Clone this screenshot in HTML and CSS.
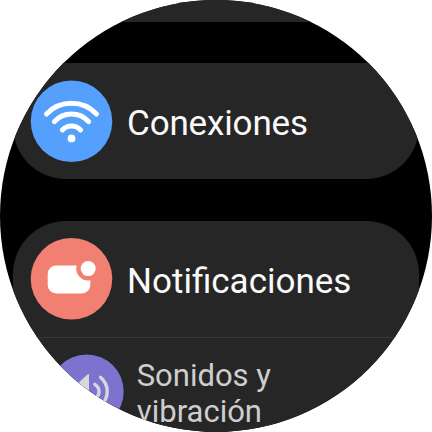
FILE: index.html
```
<!DOCTYPE html>
<html lang="es">
<head>
<meta charset="utf-8">
<title>Ajustes</title>
<link rel="stylesheet" href="styles.css">
</head>
<body>
<main class="watch">
  <div class="card previous"></div>
  <section class="card">
    <div class="row">
      <svg class="icon" viewBox="-40.5 -41.3 82 82">
        <circle r="40.8" fill="#559ffd"/>
        <g fill="none" stroke="#fff" stroke-width="5" stroke-linecap="round">
          <path d="M-25-7.3A34.6 34.6 0 0 1 25-7.3"/>
          <path d="M-17.1.4A23 23 0 0 1 17.1.4"/>
          <path d="M-9.1 8.7A12.5 12.5 0 0 1 9.1 8.7"/>
        </g>
        <circle cy="17.1" r="3.9" fill="#fff"/>
      </svg>
      <span class="label connections">Conexiones</span>
    </div>
  </section>
  <section class="card group">
    <div class="row">
      <svg class="icon" viewBox="-40.5 -40.8 82 82">
        <circle r="40.8" fill="#f28072"/>
        <rect x="-23.8" y="-13.2" width="42.6" height="27.8" rx="8.5" fill="#fff"/>
        <circle cx="16.7" cy="-10.2" r="12" fill="#f28072"/>
        <circle cx="16.7" cy="-10.2" r="7.5" fill="#fff"/>
      </svg>
      <span class="label">Notificaciones</span>
    </div>
    <div class="row small">
      <svg class="icon" viewBox="-36.7 -36.5 74 74">
        <circle r="37" fill="#7d73cf"/>
        <path d="M2.3-16.5V16.5Q2.3 18 .8 17L-9 8H-16Q-18 8-18 6V-6Q-18-8-16-8H-9L.8-17Q2.3-18 2.3-16.5Z" fill="#d8d8dc"/>
        <g fill="none" stroke="#d8d8dc" stroke-width="3.4" stroke-linecap="round">
          <path d="M8.2-7.2Q12.3-4.5 12.3 0T8.2 7.2"/>
          <path d="M13.8-14.2Q20.5-8.5 20.5 0T13.8 14.2"/>
        </g>
      </svg>
      <span class="label">Sonidos y<br>vibración</span>
    </div>
  </section>
</main>
</body>
</html>
```
FILE: styles.css
```
body {
  margin: 0;
  background: #fff;
  font-family: Roboto, "Liberation Sans", sans-serif;
}
.watch {
  width: 432px;
  height: 432px;
  box-sizing: border-box;
  padding: 0 13px;
  overflow: hidden;
  background: #000;
  clip-path: circle(216px at 50% 50%);
}
.card {
  height: 116px;
  margin-bottom: 42px;
  border-radius: 53px;
  background: #262626;
}
.card.previous {
  height: 22px;
  margin-bottom: 41px;
  border-radius: 0;
}
.group {
  height: 233px;
  margin: 0;
}
.row {
  display: flex;
  align-items: center;
  height: 116px;
  box-sizing: border-box;
  padding-left: 18px;
}
.icon {
  flex: none;
  width: 82px;
  height: 82px;
  overflow: visible;
}
.label {
  margin-left: 14px;
  color: #fafafa;
  font-size: 35px;
  line-height: 42px;
  white-space: nowrap;
  padding-top: 6px;
}
.connections {
  letter-spacing: -0.15px;
}
.small {
  align-items: flex-start;
  border-top: 1px solid #383838;
  padding: 17px 0 0 37px;
}
.small .icon {
  width: 74px;
  height: 74px;
}
.small .label {
  margin-left: 12.7px;
  padding-top: 3px;
  color: #cecece;
  font-size: 31px;
  line-height: 36px;
}
```
